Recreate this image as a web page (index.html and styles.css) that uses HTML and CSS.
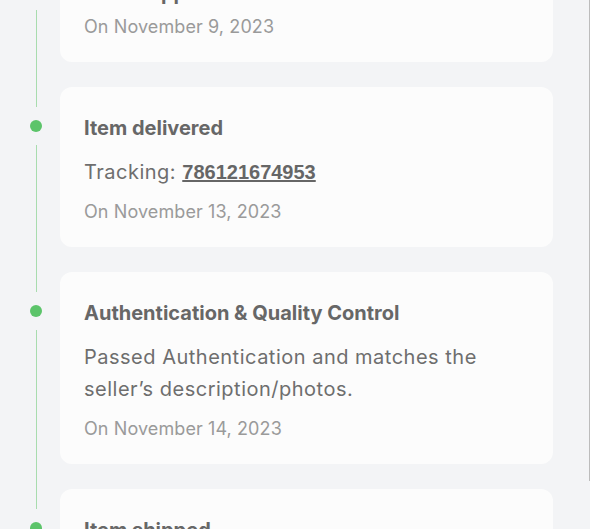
FILE: index.html
```html
<!DOCTYPE html>
<html lang="en">
<head>
  <meta charset="UTF-8">
  <meta name="viewport" content="width=device-width, initial-scale=1.0">
  <title>Order history</title>
  <link rel="stylesheet" href="styles.css">
</head>
<body>

<div class="panel">
  <ul class="timeline">
    <li class="event">
      <div class="rail">
        <span class="rail-line rail-line-top"></span>
        <span class="dot"></span>
        <span class="rail-line rail-line-bottom"></span>
      </div>
      <div class="card">
        <h3 class="card-title card-title-tight">Item shipped</h3>
        <p class="card-date">On November 9, 2023</p>
      </div>
    </li>

    <li class="event">
      <div class="rail">
        <span class="rail-line rail-line-top"></span>
        <span class="dot"></span>
        <span class="rail-line rail-line-bottom"></span>
      </div>
      <div class="card">
        <h3 class="card-title">Item delivered</h3>
        <p class="card-text">Tracking: <a href="#" class="tracking">786121674953</a></p>
        <p class="card-date">On November 13, 2023</p>
      </div>
    </li>

    <li class="event">
      <div class="rail">
        <span class="rail-line rail-line-top"></span>
        <span class="dot"></span>
        <span class="rail-line rail-line-bottom"></span>
      </div>
      <div class="card">
        <h3 class="card-title">Authentication &amp; Quality Control</h3>
        <p class="card-text">Passed Authentication and matches the seller’s description/photos.</p>
        <p class="card-date">On November 14, 2023</p>
      </div>
    </li>

    <li class="event">
      <div class="rail">
        <span class="rail-line rail-line-top"></span>
        <span class="dot"></span>
        <span class="rail-line rail-line-bottom"></span>
      </div>
      <div class="card">
        <h3 class="card-title">Item shipped</h3>
        <p class="card-text">Tracking: <a href="#" class="tracking">786143370212</a></p>
        <p class="card-date">On November 15, 2023</p>
      </div>
    </li>
  </ul>
</div>

</body>
</html>
```

FILE: styles.css
```css
/* General */
html,
body {
  margin: 0;
  height: 100%;
  overflow: hidden;
}

body {
  font-family: Inter, "Liberation Sans", sans-serif;
  background: #f3f4f6;
}

/* Panel with the right edge line */
.panel {
  width: 590px;
  height: 100%;
  box-sizing: border-box;
  border-right: 1px solid #bcbcbc;
}

/* Timeline (scrolled a bit, first card cut at the top) */
.timeline {
  list-style: none;
  margin: -48px 0 0;
  padding: 0 36px 0 0;
}

.event {
  display: flex;
}

.rail {
  width: 60px;
  flex: none;
  display: flex;
  flex-direction: column;
  padding-left: 30px;
  box-sizing: border-box;
}

.rail-line {
  width: 1px;
  margin-left: 6px;
  background: #a8dcae;
}

.rail-line-top {
  height: 20px;
  flex: none;
}

.rail-line-bottom {
  flex: 1;
}

.dot {
  width: 12px;
  height: 12px;
  flex: none;
  border-radius: 50%;
  background: #5cc46a;
  margin: 13px 0;
}

/* Cards */
.card {
  flex: 1;
  margin-bottom: 25px;
  padding: 29px 24px 23px;
  background: #fcfcfc;
  border-radius: 12px;
}

.card-title {
  margin: 0 0 16px;
  font-size: 20px;
  line-height: 24px;
  font-weight: 700;
  color: #676767;
}

.card-title-tight {
  margin-bottom: 10px;
}

.card-text {
  margin: 0 0 12px;
  font-size: 20px;
  line-height: 32px;
  letter-spacing: 0.5px;
  color: #6e6e6e;
}

.tracking {
  font-family: "Liberation Sans", Arial, sans-serif;
  font-weight: 700;
  letter-spacing: 0;
  color: #666;
}

.card-date {
  margin: 0;
  font-size: 18px;
  line-height: 24px;
  letter-spacing: 0.1px;
  color: #9a9a9a;
}
```
